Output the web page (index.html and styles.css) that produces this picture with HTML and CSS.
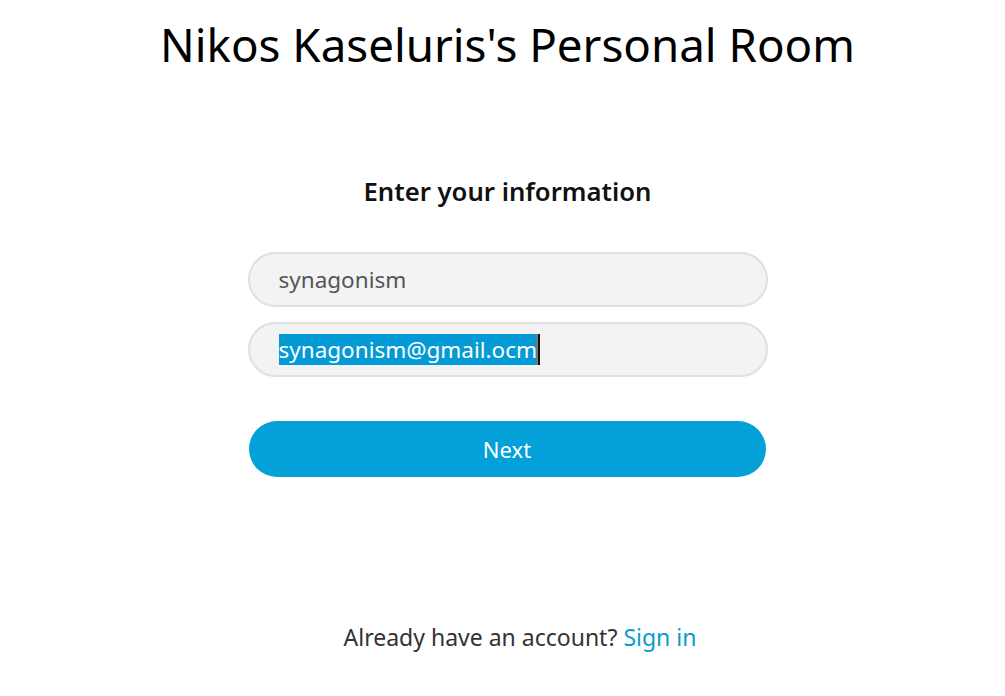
FILE: index.html
```html
<!DOCTYPE html>
<html>
<head>
<meta charset="utf-8">
<link rel="stylesheet" href="styles.css">
</head>
<body>
<div class="page">
  <h1 class="title">Nikos Kaseluris's Personal Room</h1>
  <h2 class="subtitle">Enter your information</h2>
  <div class="form">
    <div class="field"><span class="value">synagonism</span></div>
    <div class="field field-gap"><span class="value"><span class="sel">synagonism@gmail.ocm</span><span class="caret"></span></span></div>
    <div class="btn">Next</div>
  </div>
  <div class="footer">Already have an account? <span class="link">Sign in</span></div>
</div>
</body>
</html>
```

FILE: styles.css
```css
html, body { margin: 0; padding: 0; background: #fff; }
body { font-family: "Noto Sans", "Open Sans", sans-serif; }
.page { width: 1005px; height: 696px; box-sizing: border-box; padding-left: 10px; display: flex; flex-direction: column; align-items: center; }
.title { margin: 14px 0 0 0; font-weight: 400; font-size: 45.7px; line-height: 60px; color: #000; }
.subtitle { margin: 100px 0 0 0; font-size: 25.7px; font-weight: 600; line-height: 36px; color: #111; }
.form { margin-top: 42px; width: 520px; display: flex; flex-direction: column; }
.field { box-sizing: border-box; height: 55px; border: 2px solid #e0e0e0; border-radius: 28px; background: #f3f3f3; display: flex; align-items: center; padding-left: 29px; }
.field-gap { margin-top: 15px; }
.value { font-size: 22.5px; color: #555; display: flex; align-items: center; }
.sel { background: #039ad6; color: #fff; line-height: 31px; }
.caret { width: 2px; height: 31px; background: #111; border-left: 1px solid #d2691e; }
.btn { margin-top: 44px; margin-left: 1px; width: 517px; height: 56px; border-radius: 28px; background: #04a0d8; color: #fff; font-size: 22px; display: flex; align-items: center; justify-content: center; }
.footer { margin-top: 144px; margin-left: 25px; font-size: 23px; line-height: 32px; color: #333; }
.link { color: #089bd3; }
```
